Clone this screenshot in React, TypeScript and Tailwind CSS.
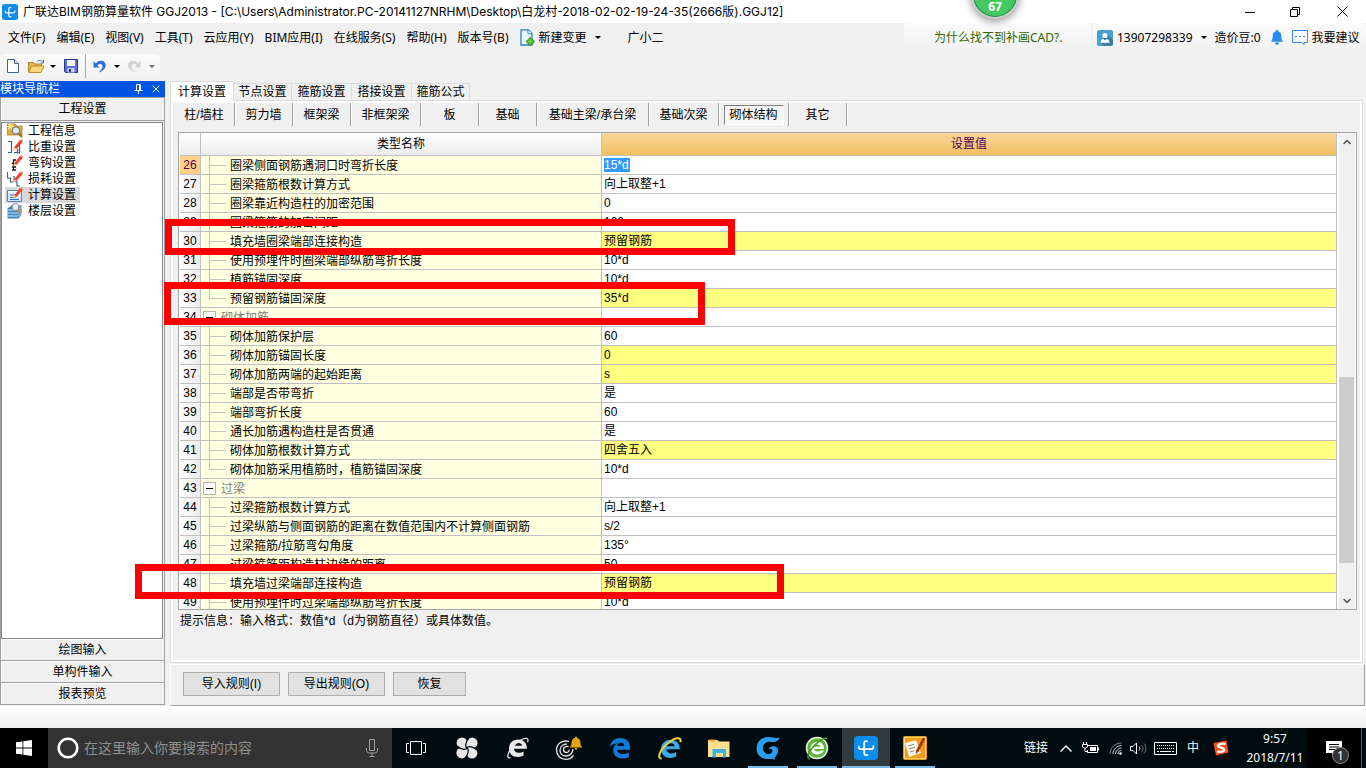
import { type ReactNode } from 'react';
import clsx from 'clsx';
import { ChevronDown, ChevronUp, X } from 'lucide-react';

type Row = {
  no: number;
  name: string;
  value: string;
  group?: boolean;
  last?: boolean;
  marked?: boolean;
};

const MENUS = [
  '文件(F)',
  '编辑(E)',
  '视图(V)',
  '工具(T)',
  '云应用(Y)',
  'BIM应用(I)',
  '在线服务(S)',
  '帮助(H)',
  '版本号(B)',
];

const TABS = [
  { label: '计算设置', width: 'w-16' },
  { label: '节点设置', width: 'w-[58px]' },
  { label: '箍筋设置', width: 'w-[60px]' },
  { label: '搭接设置', width: 'w-[60px]' },
  { label: '箍筋公式', width: 'w-[58px]' },
];

const SUB_TABS = [
  { label: '柱/墙柱', width: 'w-[61px]' },
  { label: '剪力墙', width: 'w-[58px]' },
  { label: '框架梁', width: 'w-[58px]' },
  { label: '非框架梁', width: 'w-[70px]' },
  { label: '板', width: 'w-[58px]' },
  { label: '基础', width: 'w-[58px]' },
  { label: '基础主梁/承台梁', width: 'w-[112px]' },
  { label: '基础次梁', width: 'w-[70px]' },
  { label: '砌体结构', width: 'w-[70px]', active: true },
  { label: '其它', width: 'w-[58px]' },
];

const ROWS: Row[] = [
  { no: 26, name: '圈梁侧面钢筋遇洞口时弯折长度', value: '15*d' },
  { no: 27, name: '圈梁箍筋根数计算方式', value: '向上取整+1' },
  { no: 28, name: '圈梁靠近构造柱的加密范围', value: '0' },
  { no: 29, name: '圈梁箍筋的加密间距', value: '100' },
  { no: 30, name: '填充墙圈梁端部连接构造', value: '预留钢筋', marked: true },
  { no: 31, name: '使用预埋件时圈梁端部纵筋弯折长度', value: '10*d' },
  { no: 32, name: '植筋锚固深度', value: '10*d' },
  { no: 33, name: '预留钢筋锚固深度', value: '35*d', last: true, marked: true },
  { no: 34, name: '砌体加筋', value: '', group: true },
  { no: 35, name: '砌体加筋保护层', value: '60' },
  { no: 36, name: '砌体加筋锚固长度', value: '0', marked: true },
  { no: 37, name: '砌体加筋两端的起始距离', value: 's', marked: true },
  { no: 38, name: '端部是否带弯折', value: '是' },
  { no: 39, name: '端部弯折长度', value: '60' },
  { no: 40, name: '通长加筋遇构造柱是否贯通', value: '是' },
  { no: 41, name: '砌体加筋根数计算方式', value: '四舍五入', marked: true },
  { no: 42, name: '砌体加筋采用植筋时，植筋锚固深度', value: '10*d', last: true },
  { no: 43, name: '过梁', value: '', group: true },
  { no: 44, name: '过梁箍筋根数计算方式', value: '向上取整+1' },
  { no: 45, name: '过梁纵筋与侧面钢筋的距离在数值范围内不计算侧面钢筋', value: 's/2' },
  { no: 46, name: '过梁箍筋/拉筋弯勾角度', value: '135°' },
  { no: 47, name: '过梁箍筋距构造柱边缘的距离', value: '50' },
  { no: 48, name: '填充墙过梁端部连接构造', value: '预留钢筋', marked: true },
  { no: 49, name: '使用预埋件时过梁端部纵筋弯折长度', value: '10*d' },
];

function Caret({ dim = false }: { dim?: boolean }) {
  return (
    <svg width="6" height="3" viewBox="0 0 6 3" aria-hidden="true" className="shrink-0">
      <path d="M0 0h6L3 3z" fill={dim ? '#666' : '#000'} />
    </svg>
  );
}

function AppLogo({ size }: { size: number }) {
  return (
    <svg width={size} height={size} viewBox="0 0 24 24" aria-hidden="true" className="shrink-0">
      <rect width="24" height="24" rx="4" fill="#0b8df0" />
      <g fill="none" stroke="#fff" strokeWidth="1.8" strokeLinecap="round">
        <path d="M13 5.400c-1.800-.6-2.800.4-2.800 2v9.400c0 2 1.200 2.900 3.300 2.200" />
        <path d="M5 10.600c-.6 1.600.3 2.600 1.800 2.600h10.400c1.700 0 2.600-1.200 2-2.900" />
      </g>
    </svg>
  );
}

/* ---------- title bar and menus ---------- */

function TitleBar() {
  return (
    <header className="flex h-[23px] shrink-0 items-center bg-white pl-[2px]">
      <AppLogo size={16} />
      <h1 className="ml-[5px] font-[Inter,'Noto_Sans_CJK_SC',sans-serif] text-xs leading-5 whitespace-nowrap">
        广联达BIM钢筋算量软件 GGJ2013 - [C:\Users\Administrator.PC-20141127NRHM\Desktop\白龙村-2018-02-02-19-24-35(2666版).GGJ12]
      </h1>
      <div className="ml-auto flex items-center">
        <button type="button" aria-label="最小化" className="flex h-5 w-[45px] items-center justify-center">
          <svg width="10" height="10">
            <path d="M0 5.500h10" stroke="#000" />
          </svg>
        </button>
        <button type="button" aria-label="还原" className="flex h-5 w-[46px] items-center justify-center">
          <svg width="10" height="10" fill="none" stroke="#000">
            <path d="M.5 2.500h7v7h-7zM2.500 2.500v-2h7v7h-2" />
          </svg>
        </button>
        <button type="button" aria-label="关闭" className="flex h-5 w-12 items-center justify-center">
          <svg width="11" height="11" stroke="#000">
            <path d="M.5.5l10 10M10.500.5l-10 10" />
          </svg>
        </button>
      </div>
    </header>
  );
}

function MenuBar() {
  return (
    <div className="flex h-[29px] shrink-0 items-stretch text-xs leading-5">
      <nav className="flex items-center gap-[11px] pl-2">
        {MENUS.map((m) => (
          <button type="button" key={m} className="whitespace-nowrap">
            {m}
          </button>
        ))}
        <button type="button" className="flex items-center whitespace-nowrap">
          <svg width="15" height="17" viewBox="0 0 15 17" className="mr-1" aria-hidden="true">
            <path d="M1 .8h7.500L12 4.500V16H1z" fill="#eaf6fd" stroke="#2a83c0" strokeWidth="1.300" />
            <path d="M8 .8v4h4" fill="#fff" stroke="#2a83c0" />
            <path d="M10.300 8.300 12 10l2.700 2.500L12.500 15l-2.200 1.900L8.500 15 6 12.500 8.500 10z" fill="#45ad22" stroke="#2c7c12" strokeWidth=".6" />
            <path d="M10.300 10v5M7.800 12.500h5" stroke="#7fdc4c" />
          </svg>
          新建变更
          <span className="ml-2">
            <Caret />
          </span>
        </button>
        <button type="button" className="ml-4 whitespace-nowrap">
          广小二
        </button>
      </nav>
      <div className="ml-auto flex items-stretch gap-[2px]">
        <a
          href="#cad"
          className="flex w-[187px] items-center rounded-t bg-linear-to-b from-[#fcfcfc] to-[#f0f0f0] pl-[30px] text-[#336600]"
        >
          为什么找不到补画CAD?.
        </a>
        <div className="flex w-[273px] items-center rounded-t bg-linear-to-b from-[#fcfcfc] to-[#f0f0f0] pl-1 whitespace-nowrap">
          <button type="button" className="flex items-center">
            <svg width="16" height="16" viewBox="0 0 16 16" className="mr-1" aria-hidden="true">
              <rect width="16" height="16" rx="2" fill="#4a9fd0" />
              <path d="m10 4 6 6v4a2 2 0 0 1-2 2H7l-4-4z" fill="#3a7ea8" />
              <circle cx="8" cy="5.500" r="2.600" fill="#fff" />
              <path d="M3.500 12.800c0-2.800 1.400-3.600 3-3.800L8 10.500 9.500 9c1.600.2 3 1 3 3.800z" fill="#fff" />
            </svg>
            13907298339
            <span className="mx-2">
              <Caret />
            </span>
          </button>
          <span>造价豆:0</span>
          <button type="button" aria-label="通知" className="ml-[10px]">
            <svg width="12" height="15" viewBox="0 0 12 15" fill="#2b8cf0">
              <path d="M6 0c.9 0 1.400.6 1.400 1.400C9.500 2 10.300 3.600 10.300 5.500c0 3 .4 4.300 1.700 6.200H0c1.300-1.900 1.700-3.200 1.700-6.200 0-1.900.8-3.500 2.900-4.100C4.600.6 5.100 0 6 0zM4 12.500h4c0 1.500-.9 2.300-2 2.300s-2-.8-2-2.300z" />
            </svg>
          </button>
          <button type="button" className="ml-[9px] flex items-center">
            <svg width="16" height="15" viewBox="0 0 16 15" className="mr-1" fill="none" stroke="#3a86e0" aria-hidden="true">
              <path d="M.5.5h15v12h-3.500v2l-2-2H.5z" />
              <path d="M3 6.500h10" strokeDasharray="2 2" />
            </svg>
            我要建议
          </button>
        </div>
      </div>
    </div>
  );
}

function ToolBar() {
  return (
    <div className="flex h-[29px] shrink-0 items-start pt-[2px]">
      <div className="flex h-6 w-[160px] items-center rounded bg-linear-to-b from-[#fbfbfb] to-[#f1f1f1] pl-[7px]">
        <button type="button" aria-label="新建">
          <svg width="12" height="14" viewBox="0 0 12 14">
            <path d="M.5.5h7l4 4v9H.5z" fill="#fdfeff" stroke="#44607e" />
            <path d="M7.500.5v4h4" fill="#dbe7f3" stroke="#44607e" />
          </svg>
        </button>
        <button type="button" aria-label="打开" className="ml-[9px]">
          <svg width="17" height="14" viewBox="0 0 17 14">
            <path d="M.5 13V3.500h5l1 1.500h7v3" fill="#e3b94f" stroke="#b08526" />
            <path d="M.8 13.500 3.500 7H16l-3 6.500z" fill="#fbd878" stroke="#b98a26" />
            <path d="M9 2.500C11 .5 13.500 1 14.500 3M15.500 1v3h-3" fill="none" stroke="#4a6d94" />
          </svg>
        </button>
        <button type="button" aria-label="打开选项" className="ml-[5px]">
          <Caret />
        </button>
        <button type="button" aria-label="保存" className="ml-2">
          <svg width="14" height="14" viewBox="0 0 14 14">
            <path d="M.5.5h13v13h-12l-1-1z" fill="#5c70d8" stroke="#26358d" />
            <path d="M3 1h8v6H3z" fill="#f3f5ff" />
            <path d="M3.500 9h7v4.500h-7z" fill="#c8cfea" />
            <path d="M5 10h2v3H5z" fill="#26358d" />
          </svg>
        </button>
        <span className="ml-[7px] h-6 border-l border-[#a8a8a8]" />
        <button type="button" aria-label="撤销" className="ml-[7px]">
          <svg width="13" height="13" viewBox="0 0 13 13">
            <path d="M.5 1v6.500h6L4.300 5.200C6.500 3 9.600 3.700 9.600 6.300c0 2-1.500 4-4.100 6.200 4.500-1.600 7.200-4.200 7.200-7.300C12.700.5 6.500-.8 2.700 3.400z" fill="#2f6ed6" />
          </svg>
        </button>
        <button type="button" aria-label="撤销选项" className="ml-2">
          <Caret />
        </button>
        <button type="button" aria-label="恢复" className="ml-2">
          <svg width="13" height="13" viewBox="0 0 13 13">
            <path d="M12.500 1v6.500h-6l2.200-2.300C6.500 3 3.400 3.700 3.400 6.300c0 2 1.500 4 4.100 6.200C3 10.900.3 8.300.3 5.200.3.500 6.500-.8 10.300 3.400z" fill="#d2d2d2" />
          </svg>
        </button>
        <button type="button" aria-label="恢复选项" className="ml-2">
          <Caret dim />
        </button>
      </div>
    </div>
  );
}

/* ---------- left navigation ---------- */

const Pencil = () => (
  <g>
    <path d="M7 8.500 13 1l3 1.500L9.500 10z" fill="#e8452c" />
    <path d="M7 8.500 9.500 10 6 11.500z" fill="#f3c9a0" />
    <path d="m13 1 1.300-1L16 1v1.500z" fill="#f29a8a" />
  </g>
);

const NAV: { label: string; icon: ReactNode }[] = [
  {
    label: '工程信息',
    icon: (
      <>
        <path d="M0 1h8l2 2h5v9H0z" fill="#e0ad35" stroke="#a87818" strokeWidth=".7" />
        <path d="M3 0v7M0 3.500h7M1 1l4.500 5M5.500 1 1 6" stroke="#fff3a8" />
        <circle cx="9" cy="7.500" r="3.700" fill="#dcecff" stroke="#7b7b80" strokeWidth="1.300" />
        <path d="m12 10.500 3 3.500" stroke="#a66320" strokeWidth="2.200" />
      </>
    ),
  },
  {
    label: '比重设置',
    icon: (
      <>
        <path d="M1 2.500h3.500v11H1M7 13.500h3.500V10M10.500 13.500M12.500 6v8H10" fill="none" stroke="#34599c" strokeWidth="1.200" />
        <Pencil />
      </>
    ),
  },
  {
    label: '弯钩设置',
    icon: (
      <>
        <path d="M9 5H6.500v10M5 8l3 2M5 12h4M5 15h4" fill="none" stroke="#181818" strokeWidth="1.300" />
        <Pencil />
      </>
    ),
  },
  {
    label: '损耗设置',
    icon: (
      <>
        <path d="M.5 1v6h3v4h3M7 5v5l3 1v4h3" fill="none" stroke="#44618c" strokeWidth="1.200" />
        <Pencil />
      </>
    ),
  },
  {
    label: '计算设置',
    icon: (
      <>
        <path d="M.5 3.500h14v11H.5z" fill="#d6e6fb" stroke="#4f80c6" />
        <path d="M1 4h13v2H1z" fill="#f9fcff" />
        <path d="M3 8h4M3 10.500h6M3 12.500h9" stroke="#3b6fc4" />
        <Pencil />
      </>
    ),
  },
  {
    label: '楼层设置',
    icon: (
      <>
        <path d="m.5 5.500 4-3h10v9l-3 4H.5z" fill="#3f86bd" />
        <path d="M.5 7h11l3-3M.5 10h11l3-3M.5 13h11l3-3" fill="none" stroke="#d5ecfb" />
        <circle cx="8.500" cy="4" r="3.500" fill="#e3f1fc" stroke="#86898e" />
        <path d="m11 6.500 3.500 3" stroke="#bf8a4a" strokeWidth="2" />
      </>
    ),
  },
];

function NavButton({ children }: { children: ReactNode }) {
  return (
    <button
      type="button"
      className="h-[22px] shrink-0 border-b border-[#a0a0a0] bg-[#f0f0f0] shadow-[inset_1px_1px_0_#fff]"
    >
      {children}
    </button>
  );
}

function SideBar() {
  return (
    <aside className="mb-px flex w-[165px] shrink-0 flex-col">
      <div className="flex h-4 shrink-0 items-center bg-[#0054e3] text-white">
        <h2 className="leading-4">模块导航栏</h2>
        <button type="button" aria-label="固定" className="ml-auto">
          <svg width="9" height="10" fill="none" stroke="#fff">
            <path d="M2.500 6V.5h4V6M5.500 1v5M.5 6.500h8M4.500 7v3" />
          </svg>
        </button>
        <button type="button" aria-label="关闭导航栏" className="mr-[3px] ml-[7px]">
          <X size={12} strokeWidth={2} />
        </button>
      </div>
      <div className="flex min-h-0 flex-1 flex-col border-r border-l border-[#a0a0a0]">
        <button
          type="button"
          className="h-6 shrink-0 border-t border-b border-[#a0a0a0] bg-[#f0f0f0] shadow-[inset_1px_1px_0_#fff]"
        >
          工程设置
        </button>
        <ul className="mt-px mr-px min-h-0 flex-1 border border-[#828790] bg-white">
          {NAV.map((item, i) => (
            <li key={item.label} className="flex h-4">
              <button
                type="button"
                className={clsx('ml-[3px] flex h-4 items-center pr-1', i === 4 && 'bg-[#d9d9d9]')}
              >
                <svg width="16" height="16" viewBox="0 0 16 16" aria-hidden="true" className="mr-[5px] ml-[2px]">
                  {item.icon}
                </svg>
                {item.label}
              </button>
            </li>
          ))}
        </ul>
        <NavButton>绘图输入</NavButton>
        <NavButton>单构件输入</NavButton>
        <NavButton>报表预览</NavButton>
      </div>
    </aside>
  );
}

/* ---------- settings grid ---------- */

function TreeCell({ row }: { row: Row }) {
  if (row.group) {
    return (
      <div className="flex h-[18px] items-center pl-[2px] leading-[18px] text-[#808080]">
        <button
          type="button"
          aria-label={`折叠${row.name}`}
          className="mr-[5px] flex size-[13px] items-center justify-center border border-[#b4b4b4] bg-white"
        >
          <span className="h-px w-[7px] bg-black" />
        </button>
        <span className="pt-[2px]">{row.name}</span>
      </div>
    );
  }
  return (
    <div className="flex h-[18px] items-center pl-2 leading-[18px]">
      <span className="mr-1 flex w-[17px] flex-col self-stretch">
        <span className="h-[10px] border-b border-l border-[#c0c0c0]" />
        <span className={clsx('flex-1 border-[#c0c0c0]', !row.last && 'border-l')} />
      </span>
      <span className="pt-[2px]">{row.name}</span>
    </div>
  );
}

function SettingsTable() {
  return (
    <table className="w-full table-fixed border-separate border-spacing-0">
      <colgroup>
        <col className="w-[21px]" />
        <col className="w-[401px]" />
        <col />
      </colgroup>
      <thead>
        <tr className="h-[23px]">
          <th className="border-r border-b border-[#c0c0c0] bg-linear-to-b from-white to-[#ececec] p-0" aria-label="行号" />
          <th className="border-r border-b border-[#c0c0c0] bg-linear-to-b from-white to-[#ececec] p-0 font-normal">
            类型名称
          </th>
          <th className="border-r border-b border-[#c0c0c0] bg-linear-to-b from-[#fad69b] to-[#f0bf5f] p-0 font-normal text-[#550055]">
            设置值
          </th>
        </tr>
      </thead>
      <tbody>
        {ROWS.map((row) => {
          const current = row.no === 26;
          return (
            <tr key={row.no} className="h-[19px]">
              <td
                className={clsx(
                  'border-r border-b border-[#c0c0c0] p-0 text-center',
                  current ? 'bg-[#ffd086] text-[#550055]' : 'bg-linear-to-r from-white to-[#ececec]'
                )}
              >
                {row.no}
              </td>
              <td className="border-r border-b border-[#c0c0c0] bg-[#ffffe1] p-0 whitespace-nowrap">
                <TreeCell row={row} />
              </td>
              <td
                className={clsx(
                  'border-r border-b border-[#c0c0c0] p-0 pl-[2px]',
                  row.marked ? 'bg-[#ffff80]' : 'bg-white'
                )}
              >
                {current ? (
                  <input
                    defaultValue={row.value}
                    aria-label={row.name}
                    className="block h-[14px] w-[26px] bg-[#3399ff] p-0 text-white outline-none"
                  />
                ) : (
                  <div className="h-[18px] leading-[18px]">{row.value}</div>
                )}
              </td>
            </tr>
          );
        })}
      </tbody>
    </table>
  );
}

function ScrollBar() {
  return (
    <div className="flex w-4 shrink-0 flex-col items-center bg-[#f0f0f0]">
      <button type="button" aria-label="向上滚动" className="flex h-[17px] items-center text-[#505050]">
        <ChevronUp size={12} strokeWidth={3} />
      </button>
      <div className="flex w-full flex-1 flex-col">
        <span className="flex-[228]" />
        <span className="w-[15px] flex-[186] bg-[#cdcdcd]" />
        <span className="flex-[29]" />
      </div>
      <button type="button" aria-label="向下滚动" className="flex h-[17px] items-center text-[#505050]">
        <ChevronDown size={12} strokeWidth={3} />
      </button>
    </div>
  );
}

function SettingsPanel() {
  return (
    <main className="flex min-w-0 flex-1 flex-col pl-[5px]">
      <div role="tablist" className="flex h-[19px] shrink-0 items-end">
        {TABS.map((tab, i) => (
          <button
            type="button"
            role="tab"
            aria-selected={i === 0}
            key={tab.label}
            className={clsx(
              'border-[#dcdcdc] whitespace-nowrap',
              tab.width,
              i === 0 ? 'relative -mb-px h-5 border border-b-0 bg-white' : 'h-[17px] border-t border-r bg-[#f0f0f0]'
            )}
          >
            {tab.label}
          </button>
        ))}
      </div>
      <section className="mr-[3px] flex min-h-0 flex-1 flex-col border border-[#dcdcdc] bg-white p-[2px]">
        <div className="flex min-h-0 flex-1 flex-col bg-[#f0f0f0] pr-[3px] pl-px">
          <div className="flex h-[23px] shrink-0">
            {SUB_TABS.map((tab) => (
              <button
                type="button"
                key={tab.label}
                className={clsx(
                  'flex shrink-0 items-center justify-center border-r border-[#a0a0a0] whitespace-nowrap shadow-[1px_0_0_#fff]',
                  tab.width
                )}
              >
                {tab.active ? (
                  <span className="flex h-[20px] w-[60px] items-center justify-center border border-t-[#808080] border-r-white border-b-white border-l-[#808080] bg-[#f8f8f8]">
                    {tab.label}
                  </span>
                ) : (
                  tab.label
                )}
              </button>
            ))}
          </div>
          <div className="mt-[6px] ml-1 flex min-h-0 flex-1 border border-[#a5a5a5] bg-white pr-px pl-px">
            <div className="min-w-0 flex-1 overflow-hidden">
              <SettingsTable />
            </div>
            <div className="ml-[2px] flex">
              <ScrollBar />
            </div>
          </div>
          <p className="h-[50px] shrink-0 pl-[6px] leading-[22px]">提示信息：输入格式：数值*d（d为钢筋直径）或具体数值。</p>
        </div>
      </section>
      <div className="mt-px mr-px flex h-[42px] shrink-0 items-center gap-2 border-t border-r border-b border-l border-t-white border-r-[#a0a0a0] border-b-[#a0a0a0] border-l-white pb-[3px] pl-3">
        <button type="button" className="h-6 w-[97px] border border-[#adadad] bg-[#e1e1e1]">
          导入规则(I)
        </button>
        <button type="button" className="h-6 w-[97px] border border-[#adadad] bg-[#e1e1e1]">
          导出规则(O)
        </button>
        <button type="button" className="h-6 w-[73px] border border-[#adadad] bg-[#e1e1e1]">
          恢复
        </button>
      </div>
    </main>
  );
}

/* ---------- desktop taskbar ---------- */

function TaskButton({
  label,
  active = false,
  line,
  children,
}: {
  label: string;
  active?: boolean;
  line?: string;
  children: ReactNode;
}) {
  return (
    <button
      type="button"
      aria-label={label}
      className={clsx('relative flex h-10 w-12 items-center justify-center', active && 'bg-[#333b3d]')}
    >
      {children}
      {line && <span className={clsx('absolute bottom-0 h-[2px] bg-[#76b9ed]', line)} />}
    </button>
  );
}

const E_PATH =
  'M21 12.700H8c.2 2.600 2.200 4 4.700 4 2 0 3.300-.5 4.800-1.300v4.200c-1.600.9-3.400 1.400-5.800 1.400C6.600 21 3 17.700 3 12.500 3 7.300 6.700 3.500 12 3.500c5.400 0 9 3.300 9 9.200zM8.100 9.800h7.800C15.700 8 14.500 7 12.200 7c-2.200 0-3.600 1-4.100 2.800z';

function TaskBar() {
  return (
    <footer className="flex h-10 shrink-0 items-center bg-[#000c10] text-xs leading-5 text-white">
      <button type="button" aria-label="开始" className="flex h-10 w-12 shrink-0 items-center justify-center bg-black">
        <svg width="16" height="16" viewBox="0 0 16 16" fill="#fff">
          <path d="M0 2.300 6.500 1.400v6.200H0zM7.300 1.300 16 0v7.600H7.300zM0 8.400h6.500v6.200L0 13.700zM7.300 8.400H16V16l-8.700-1.300z" />
        </svg>
      </button>
      <label className="flex h-10 w-[344px] shrink-0 items-center bg-[#333] pl-2">
        <svg width="24" height="24" viewBox="0 0 24 24" aria-hidden="true" className="shrink-0">
          <circle cx="12" cy="12" r="9.300" fill="none" stroke="#fff" strokeWidth="2.600" />
        </svg>
        <input
          type="text"
          aria-label="搜索"
          placeholder="在这里输入你要搜索的内容"
          className="ml-1 min-w-0 flex-1 bg-transparent text-sm leading-5 outline-none placeholder:text-[#8f8f8f]"
        />
        <svg width="12" height="18" viewBox="0 0 12 18" fill="none" stroke="#a0a0a0" aria-hidden="true" className="mr-[14px] shrink-0">
          <path d="M3.500.5h5v11h-5zM.5 9v2.500c0 1 1 2.500 3 2.500h5c2 0 3-1.500 3-2.500V9M6 14v3M3.500 17.500h5" />
        </svg>
      </label>
      <div className="flex gap-[3px]">
        <TaskButton label="任务视图">
          <svg width="20" height="14" fill="none" stroke="#fff">
            <path d="M4.500.5h11v13h-11zM3 2.500H.5v9H3M17 2.500h2.500v9H17" />
          </svg>
        </TaskButton>
        <TaskButton label="应用">
          <svg width="22" height="22" viewBox="0 0 22 22">
            <g fill="#e8e8e8">
              <circle cx="6" cy="5.800" r="5.400" />
              <circle cx="16.200" cy="6" r="5.400" />
              <circle cx="16" cy="16.200" r="5.400" />
              <circle cx="5.800" cy="16" r="5.400" />
              <path d="M6 6h10v10H6z" />
            </g>
            <path
              d="M11 11C8.500 10 10 4 12.500 1.500M11 11c1-2.500 7-1 9.500 1.500M11 11c2.500 1 1 7-1.500 9.500M11 11c-1 2.500-7 1-9.500-1.500"
              fill="none"
              stroke="#000c10"
              strokeWidth="1.200"
            />
          </svg>
        </TaskButton>
        <TaskButton label="浏览器">
          <svg width="24" height="24" viewBox="0 0 24 24">
            <path d={E_PATH} fill="#e8e8e8" />
            <path d="M4.500 21.500C.5 23.500 0 17 9 8.500 17 1 24 .5 21.500 6" fill="none" stroke="#e8e8e8" strokeWidth="1.300" />
          </svg>
        </TaskButton>
        <TaskButton label="提醒">
          <svg width="28" height="26" viewBox="0 0 28 26">
            <g fill="none" stroke="#e4e4e4" strokeWidth="1.300">
              <path d="M14 6.500C7 4.500 1.500 9 1.500 15c0 5.500 4 9.300 9 9.300 3.500 0 6.500-1.500 8-4" />
              <path d="M12 9c-4 0-7 2.500-7 6.300 0 3.400 2.600 5.700 5.800 5.700 4 0 7.200-3 7.200-7" />
              <path d="M13.500 11.500c-3-.8-5 .8-5 3 0 1.800 1.300 3 3 3 1.800 0 3-1.400 2.500-3" />
            </g>
            <path d="M14.500 12.500c2.500-2 1.500-4 2.500-7 .5-1.700 1.600-2.300 2.800-2.500L21 1l1.200 2c1.200.2 2.300.8 2.800 2.500 1 3 0 5 2.500 7z" fill="#e6a400" />
            <path d="M19.300 13h3.400l-1.700 2.200z" fill="#e6a400" />
          </svg>
        </TaskButton>
        <TaskButton label="Edge">
          <svg width="22" height="22" viewBox="0 0 22 22" fill="#0f7bdc">
            <path d="M1 10C1.700 4.500 5.500 1 11.200 1 17.300 1 21 5 21 10.300v2.400H8c.2 3.100 3.200 4.400 6.300 4.400 2.300 0 4-.6 5.600-1.500v4.300c-1.900 1-4.200 1.500-6.700 1.500-5.400 0-8.900-3.200-8.900-8.100 0-3.200 1.700-5.600 4.200-7C4.500 6.600 2.200 8 1 10zm7.200-1h7c0-2.200-1.200-3.500-3.300-3.500-2 0-3.300 1.300-3.700 3.500z" />
          </svg>
        </TaskButton>
      </div>
      <div className="ml-[2px] flex gap-px">
        <TaskButton label="Internet Explorer">
          <svg width="25" height="25" viewBox="0 0 24 24">
            <path d={E_PATH} fill="#3da8ea" />
            <path d="M3.500 21.500C-1 22 1 14 9 7.500 16 1.500 23 0 21.500 6" fill="none" stroke="#f2cf3a" strokeWidth="2" />
          </svg>
        </TaskButton>
        <TaskButton label="文件资源管理器">
          <svg width="22" height="19" viewBox="0 0 22 19">
            <path d="M0 1h9l2 1.500h10.500V18H0z" fill="#fbdf8f" />
            <path d="M1 .5h6v2H1z" fill="#e8a72c" />
            <path d="M4.500 10h13.500v8.500h-3V14H8v4.500H4.500z" fill="#39b5ea" />
          </svg>
        </TaskButton>
        <TaskButton label="广联达" line="w-10">
          <svg width="24" height="24" viewBox="0 0 24 24">
            <path
              d="M23.500 1.500c-1 3.800-4.200 4.700-8.500 4.400C10 5.600 7 8 7 12c0 3.500 2.300 6 5.500 6 2.300 0 4-1.500 4-3.200 0-1.700-1.500-2.300-4-1.800 1.500-3.500 9.500-4 9.500 1.500 0 3-1.500 5.500-3.500 7.200l.5 2-3-1C7 24.500.5 20 .5 12.500.5 5.500 6 .5 13 1c4 .3 7.500 1.500 10.500.5z"
              fill="#2b9cf0"
            />
          </svg>
        </TaskButton>
        <TaskButton label="360浏览器" line="w-10">
          <svg width="24" height="24" viewBox="0 0 24 24">
            <circle cx="12" cy="12" r="10.500" fill="#5db53a" stroke="#e7f5e1" strokeWidth="1.500" />
            <path d="M19 13H9c.3 1.700 1.600 2.500 3.400 2.500 1.600 0 2.500-.4 3.400-1H19c-1.100 2.500-3.500 4-6.600 4C8.300 18.500 5.500 16 5.500 12.300S8.300 6 12.300 6s6.900 2.600 6.700 7zM9 10.800h6.500c-.2-1.500-1.300-2.400-3.200-2.400-1.800 0-3 .9-3.300 2.400z" fill="#fff" />
            <path d="M5 23C1 23 3 16 10 9c5-5 11-8.500 12-6" fill="none" stroke="#3c9222" strokeWidth="1.500" />
          </svg>
        </TaskButton>
        <TaskButton label="广联达BIM钢筋算量软件" active line="w-12">
          <AppLogo size={24} />
        </TaskButton>
        <TaskButton label="画图笔记" line="w-10">
          <svg width="24" height="24" viewBox="0 0 24 24">
            <rect width="24" height="24" rx="2" fill="#f39a16" />
            <path d="M1.500 1.500h21v21h-21z" fill="none" stroke="#ffd883" />
            <path d="m2 7 11-3 5 13-12 4z" fill="#fffaf0" />
            <path d="m5 10 6-1.700M6 13l6-1.700M7 16l4-1.200" stroke="#94816c" />
            <path d="M13 14.500 20 1.500l2.500 1.300-7 13-3 2.200z" fill="#9c3a14" />
          </svg>
        </TaskButton>
      </div>

      <div className="ml-auto flex items-center">
        <button type="button" className="whitespace-nowrap">
          链接
        </button>
        <button type="button" aria-label="显示隐藏的图标" className="ml-3">
          <svg width="12" height="7" fill="none" stroke="#fff" strokeWidth="1.400">
            <path d="m.5 6.500 5.500-5.500 5.500 5.500" />
          </svg>
        </button>
        <button type="button" aria-label="电池" className="ml-[10px]">
          <svg width="17" height="12" viewBox="0 0 17 12" fill="none" stroke="#fff">
            <path d="M6 3.500h9.500v7h-10V8M1.500 0v2M4.500 0v2M.5 2.500h5V5L3 6.500.5 5zM3 6.500v3h2M16.500 5.500v3" />
            <path d="M8 5h6v4H8z" fill="#fff" stroke="none" />
          </svg>
        </button>
        <button type="button" aria-label="无线网络" className="ml-[10px]">
          <svg width="13" height="13" viewBox="0 0 13 13" fill="none" stroke="#ddd">
            <path d="M1 12C1 6 6 1 12.500 1" stroke="#888" />
            <path d="M4 12c0-4.500 4-8.500 8.500-8.500M6.500 12c0-3 3-6 6-6M9 12c0-2 1.500-3.500 3.500-3.500" />
            <circle cx="11.500" cy="11.500" r="1" fill="#fff" />
          </svg>
        </button>
        <button type="button" aria-label="音量" className="ml-2">
          <svg width="17" height="13" viewBox="0 0 17 13" fill="none" stroke="#fff">
            <path d="M.5 4.500H3l3.500-3.500v11L3 8.500H.5z" />
            <path d="M9 4.500c1 1 1 3 0 4" />
            <path d="M11.500 3c2 2 2 5 0 7M14 1.500c2.500 3 2.500 7 0 10" stroke="#777" />
          </svg>
        </button>
        <button type="button" aria-label="触摸键盘" className="ml-[7px]">
          <svg width="23" height="13" viewBox="0 0 23 13" fill="none" stroke="#fff">
            <path d="M.5.5h22v12H.5z" />
            <path d="M3 3.500h17M3 6.500h17" strokeDasharray="1 1" />
            <path d="M3 9.500h2M6 9.500h11M18 9.500h2" />
          </svg>
        </button>
        <button type="button" className="ml-[10px]">
          中
        </button>
        <button type="button" aria-label="搜狗输入法" className="ml-[14px]">
          <svg width="16" height="16" viewBox="0 0 16 16">
            <path d="m.5 3 13-2.500L15.500 12.500l-12.500 3z" fill="#f4511e" />
            <path d="M12.500 4C8 3 4.500 4.500 5 6.200c.5 1.800 6 1 6.300 3.300.2 2-4 3-7.300 2" fill="none" stroke="#fff" strokeWidth="2.200" />
          </svg>
        </button>
        <div className="ml-4 w-[60px] text-center leading-[19px]">
          <time className="block">9:57</time>
          <time className="block">2018/7/11</time>
        </div>
        <button
          type="button"
          aria-label="通知中心，1条新通知"
          className="relative ml-[2px] flex h-10 w-[55px] items-center justify-center border-r border-[#555] bg-black"
        >
          <svg width="16" height="15" viewBox="0 0 16 15" aria-hidden="true">
            <path d="M0 0h16v12H9l-3 3v-3H0z" fill="#fff" />
            <path d="M3 3.500h10M3 6h10M3 8.500h7" stroke="#000" />
          </svg>
          <span className="absolute right-3 bottom-1 flex size-[17px] items-center justify-center rounded-full border border-[#888] bg-[#333] text-xs leading-3">
            1
          </span>
        </button>
        <span className="w-1" />
      </div>
    </footer>
  );
}

export default function App() {
  return (
    <div className="relative flex h-screen min-w-[1280px] flex-col overflow-hidden bg-[#f0f0f0] font-['Noto_Sans','Noto_Sans_CJK_SC',sans-serif] text-black">
      <TitleBar />
      <MenuBar />
      <ToolBar />
      <div className="flex min-h-0 flex-1 font-['Liberation_Sans','Noto_Sans_CJK_SC',sans-serif] text-xs leading-4">
        <SideBar />
        <SettingsPanel />
      </div>
      <div className="h-[22px] shrink-0 bg-linear-to-b from-white to-[#eee]" />
      <TaskBar />

      {/* floating speed ball, half hidden above the window */}
      <div className="absolute -top-[29px] left-[971px] flex size-12 items-end justify-center rounded-full border-2 border-[#ccc] bg-[#45c862] pb-1 text-xs leading-3 font-bold text-white shadow-[0_2px_8px_rgba(0,0,0,0.45),inset_0_0_0_1px_#168a4a]">
        67
      </div>

      {/* red annotation frames */}
      <div className="pointer-events-none absolute top-[219px] left-[165px] h-9 w-[570px] border-[7px] border-[#ff0000]" />
      <div className="pointer-events-none absolute top-[282px] left-[164px] h-[43px] w-[541px] border-[7px] border-[#ff0000]" />
      <div className="pointer-events-none absolute top-[564px] left-[135px] h-[35px] w-[649px] border-[7px] border-[#ff0000]" />
    </div>
  );
}
